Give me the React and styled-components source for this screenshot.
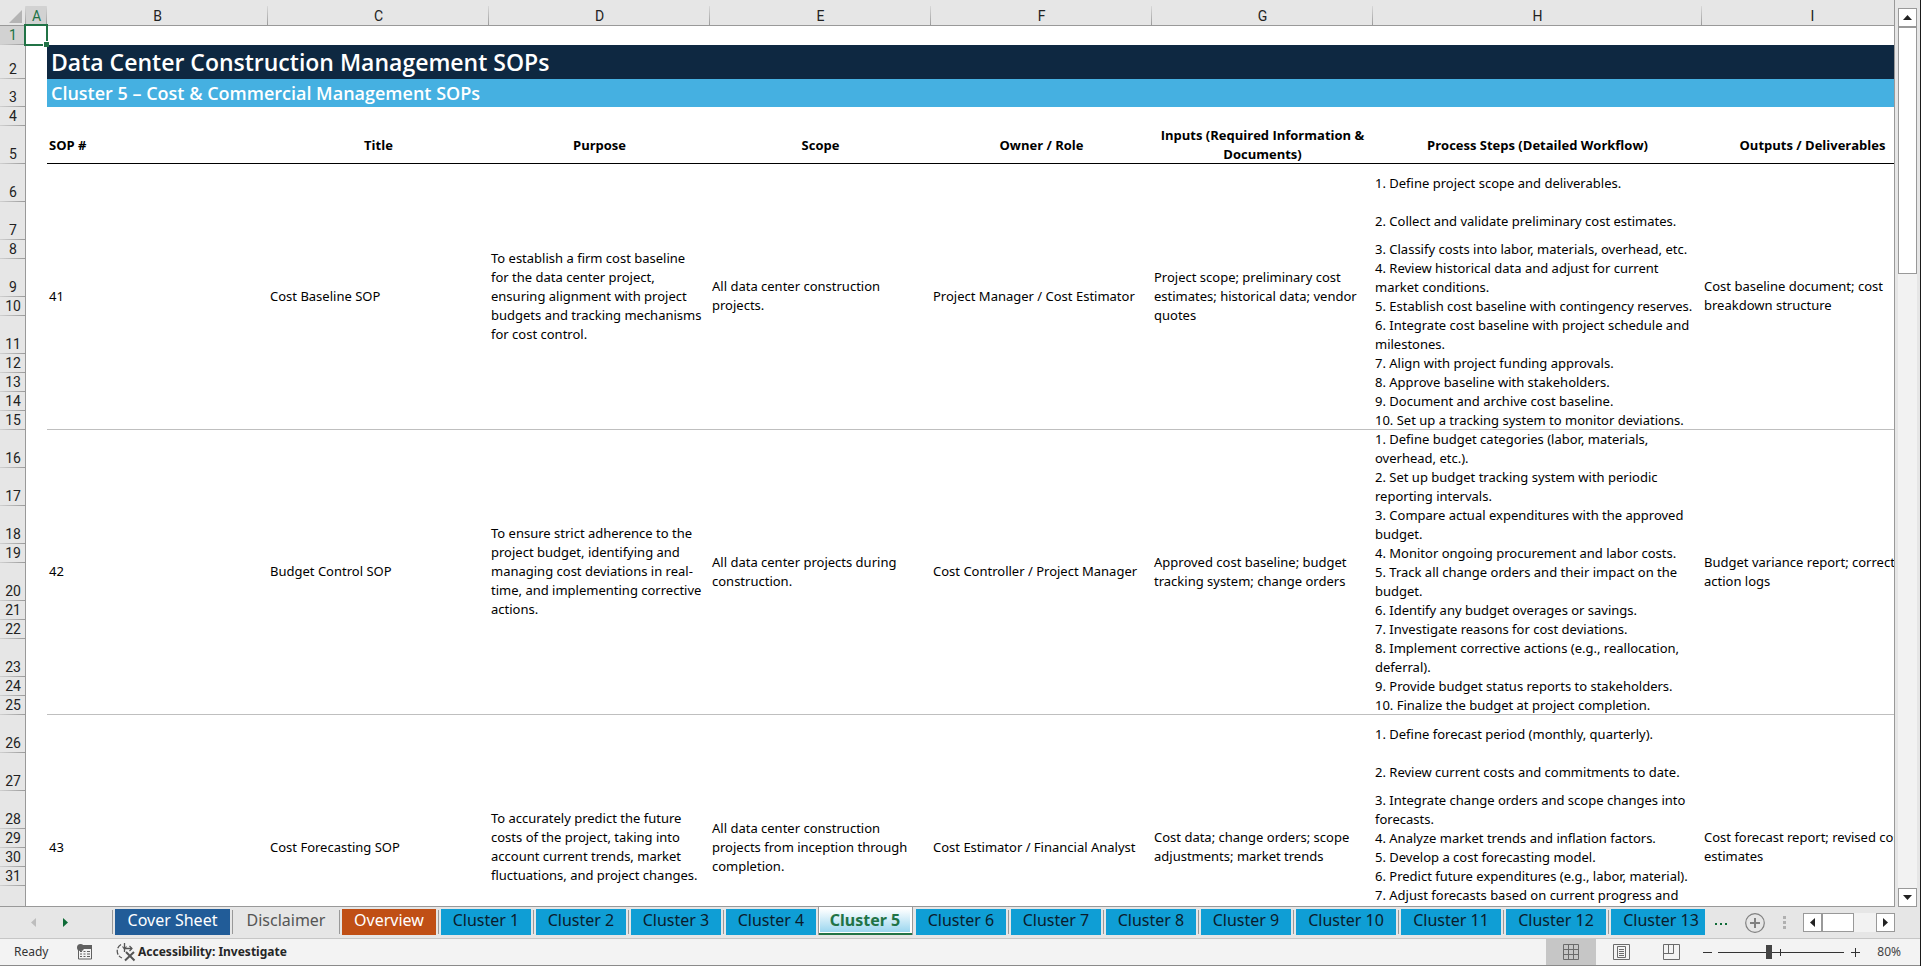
import React from "react";
import styled, { createGlobalStyle, css } from "styled-components";

const GlobalStyle = createGlobalStyle`
  *, *::before, *::after { box-sizing: border-box; }
  body { margin: 0; }
  button, input { font: inherit; margin: 0; padding: 0; }
`;

const SHEET_FONT = '"Noto Sans", "Open Sans", sans-serif';
const TITLE_FONT = '"Open Sans", "Noto Sans", sans-serif';
const CHROME = "#e6e6e6";
const LINE = "#999999";
const GREEN = "#217346";

const Window = styled.div`
  display: flex;
  flex-direction: column;
  height: 100vh;
  overflow: hidden;
  background: ${CHROME};
  border-right: 1px solid #1a1a1a;
  font-family: ${SHEET_FONT};
  color: #000;
`;

const Workspace = styled.main`
  display: flex;
  flex: 1;
  min-height: 0;
  gap: 3px;
  padding-right: 3px;
`;

const Sheet = styled.div`
  position: relative;
  flex: 1;
  min-width: 0;
  overflow: hidden;
  background: linear-gradient(#fff, #fff) 0 26px no-repeat;
  border-right: 1px solid ${LINE};
  border-bottom: 1px solid ${LINE};
`;

const Grid = styled.table`
  width: 100%;
  min-width: 1923px;
  table-layout: fixed;
  border-spacing: 0;
  font-size: 13px;
  line-height: 19px;
`;

const Col = styled.col`
  width: ${(p) => (p.$w ? `${p.$w}px` : "auto")};
`;

const Row = styled.tr`
  height: ${(p) => p.$h}px;
`;

const headingText = css`
  padding: 0;
  font-family: Roboto, sans-serif;
  font-size: 14px;
  font-weight: 400;
  text-align: center;
`;

const ColumnHeading = styled.th`
  ${headingText}
  padding-top: 6px;
  color: ${(p) => (p.$selected ? GREEN : "#222")};
  background:
    linear-gradient(${LINE}, ${LINE}) bottom / 100% 1px no-repeat,
    linear-gradient(#d8d8d8, ${LINE}) right bottom / 1px 20px no-repeat,
    linear-gradient(${(p) => (p.$selected ? "#d2d2d2, #d2d2d2" : `${CHROME}, ${CHROME}`)}) bottom / 100% 20px no-repeat,
    ${CHROME};
`;

const Corner = styled.td`
  padding: 0;
  background:
    linear-gradient(${LINE}, ${LINE}) bottom / 100% 1px no-repeat,
    linear-gradient(#d8d8d8, ${LINE}) right bottom / 1px 20px no-repeat,
    ${CHROME};
`;

const CornerButton = styled.button`
  display: block;
  width: 24px;
  height: 25px;
  padding: 9px 2px 3px 9px;
  border: 0;
  background: none;
`;

const RowHeading = styled.th`
  ${headingText}
  vertical-align: bottom;
  color: ${(p) => (p.$selected ? GREEN : "#222")};
  background:
    linear-gradient(${LINE}, ${LINE}) right / 1px 100% no-repeat,
    linear-gradient(90deg, #d0d0d0, ${LINE}) bottom / 100% 1px no-repeat,
    ${(p) => (p.$selected ? "#d2d2d2" : CHROME)};
`;

const Cell = styled.td`
  padding: 0 6px 0 2px;
  vertical-align: ${(p) => (p.$top ? "top" : "middle")};
  text-align: left;
  box-shadow: ${(p) => (p.$rule ? "inset 0 -1px #bfbfbf" : "none")};
`;

const MergedCell = styled(Cell)`
  padding-bottom: 2px;
`;

const FieldHeading = styled.th`
  padding: 0 2px;
  text-align: ${(p) => (p.$left ? "left" : "center")};
  font-family: ${TITLE_FONT};
  font-weight: 700;
  box-shadow: inset 0 -1px #000;
`;

const Banner = styled.td`
  padding: 0 4px;
  font-family: ${TITLE_FONT};
  font-weight: 600;
  font-size: ${(p) => (p.$main ? 23 : 18)}px;
  line-height: 28px;
  color: #fff;
  background: ${(p) => (p.$main ? "#0e2841" : "#45b0e1")};
`;

const Selection = styled.div`
  position: absolute;
  left: 24px;
  top: 24px;
  width: 24px;
  height: 22px;
  border: 2px solid ${GREEN};
  &::after {
    content: "";
    position: absolute;
    right: -3px;
    bottom: -3px;
    width: 6px;
    height: 6px;
    background: ${GREEN};
    border: solid #fff;
    border-width: 1px 0 0 1px;
  }
`;

const VScroll = styled.div`
  display: flex;
  flex-direction: column;
  width: 19px;
  padding-top: 8px;
`;

const HScroll = styled.div`
  display: flex;
  width: 92px;
  height: 19px;
`;

const ScrollTrack = styled.div`
  display: flex;
  flex-direction: inherit;
  flex: 1;
  background: #f2f2f2;
`;

const ScrollButton = styled.button`
  display: grid;
  place-items: center;
  width: 19px;
  height: 19px;
  border: 1px solid ${LINE};
  background: #fff;
`;

const ScrollThumb = styled.div`
  width: ${(p) => (p.$wide ? "32px" : "19px")};
  height: ${(p) => (p.$wide ? "19px" : "247px")};
  border: 1px solid ${LINE};
  background: #fff;
`;

const TabBar = styled.nav`
  display: flex;
  align-items: center;
  height: 31px;
  padding-right: 25px;
`;

const TabArrows = styled.div`
  display: flex;
  width: 112px;
  padding-left: 23px;
  gap: 12px;
`;

const ArrowButton = styled.button`
  display: grid;
  place-items: center;
  width: 20px;
  height: 20px;
  border: 0;
  background: none;
`;

const Tabs = styled.div`
  display: flex;
  align-self: stretch;
  width: 1593px;
  flex-shrink: 1;
  min-width: 0;
  overflow: hidden;
  margin-top: -1px;
`;

const TabSlot = styled.div`
  flex: none;
  padding: 3px 2px 3px 3px;
  background:
    linear-gradient(${(p) => (p.$bare ? "transparent, transparent" : `${LINE}, ${LINE}`)}) 0 4px / 1px 24px no-repeat;
`;

const tabColors = {
  navy: css`background: #215c98; color: #fff;`,
  plain: css`background: transparent; color: #555;`,
  orange: css`background: #c04f15; color: #fff;`,
  blue: css`background: #0f9ed5; color: #0b1c2c;`,
};

const Tab = styled.button`
  display: block;
  width: ${(p) => p.$w}px;
  height: 26px;
  padding-bottom: 4px;
  border: 0;
  font-size: 16px;
  line-height: 22px;
  white-space: nowrap;
  ${(p) => tabColors[p.$tone]}
`;

const ActiveSlot = styled.div`
  flex: none;
  padding: 0 2px 2px 1px;
  height: 29px;
  background: #fff;
  border: solid ${LINE};
  border-width: 0 1px;
  box-shadow: inset 0 -2px ${GREEN};
`;

const ActiveTab = styled.button`
  display: block;
  width: 90px;
  height: 26px;
  padding-top: 2px;
  border: 0;
  background: linear-gradient(#fff 10%, #9bd6ef);
  color: ${GREEN};
  font-size: 16px;
  font-weight: 700;
  line-height: 22px;
  white-space: nowrap;
`;

const TabTools = styled.div`
  display: flex;
  flex: 1;
  align-items: center;
  justify-content: space-between;
  padding-left: 10px;
`;

const MoreTabs = styled.button`
  display: grid;
  place-items: center;
  width: 13px;
  height: 20px;
  border: 0;
  background: none;
`;

const AddSheet = styled.button`
  display: block;
  width: 20px;
  height: 20px;
  border: 0;
  background: none;
`;

const StatusBar = styled.footer`
  display: flex;
  align-items: center;
  height: 28px;
  padding: 0 19px 0 14px;
  border-top: 1px solid #c6c6c6;
  border-bottom: 1px solid #8a8a8a;
  background: #f3f3f3;
  color: #333;
  font-size: 12px;
  line-height: 16px;
`;

const Ready = styled.span`
  width: 63px;
`;

const StatusButton = styled.button`
  display: flex;
  align-items: center;
  gap: 2px;
  margin-right: 24px;
  border: 0;
  background: none;
  color: #262626;
  font-weight: 700;
`;

const StatusRight = styled.div`
  display: flex;
  align-items: center;
  align-self: stretch;
  margin-left: auto;
`;

const ViewButton = styled.button`
  display: grid;
  place-items: center;
  align-self: stretch;
  width: 50px;
  border: 0;
  background: ${(p) => (p.$on ? "#c6c6c6" : "none")};
`;

const ZoomButton = styled.button`
  display: grid;
  place-items: center;
  width: 22px;
  height: 22px;
  border: 0;
  background: none;
`;

const ZoomSlider = styled.input`
  appearance: none;
  width: 126px;
  height: 14px;
  background:
    linear-gradient(#333, #333) 0 7px / 100% 1px no-repeat,
    linear-gradient(#333, #333) 62px 4px / 1px 7px no-repeat;
  &::-webkit-slider-thumb {
    appearance: none;
    width: 6px;
    height: 14px;
    background: #444;
  }
`;

const ZoomValue = styled.button`
  width: 35px;
  border: 0;
  background: none;
  color: #444;
  text-align: right;
`;

const Svg = styled.svg`
  display: block;
`;

const triangles = {
  up: "M4.5 0 L9 5 H0 Z",
  down: "M0 0 H9 L4.5 5 Z",
  left: "M5 0 V9 L0 4.5 Z",
  right: "M0 0 L5 4.5 L0 9 Z",
};

function Triangle({ dir, color = "#222" }) {
  const tall = dir === "left" || dir === "right";
  const w = tall ? 5 : 9;
  const h = tall ? 9 : 5;
  return (
    <Svg width={w} height={h} viewBox={`0 0 ${w} ${h}`} aria-hidden="true">
      <path d={triangles[dir]} fill={color} />
    </Svg>
  );
}

const letters = ["A", "B", "C", "D", "E", "F", "G", "H", "I"];
const widths = [26, 21, 221, 221, 221, 221, 221, 221, 329, null];
const fields = [
  "SOP #",
  "Title",
  "Purpose",
  "Scope",
  "Owner / Role",
  "Inputs (Required Information & Documents)",
  "Process Steps (Detailed Workflow)",
  "Outputs / Deliverables",
];

const procedures = [
  {
    first: 6,
    cells: [
      "41",
      "Cost Baseline SOP",
      "To establish a firm cost baseline for the data center project, ensuring alignment with project budgets and tracking mechanisms for cost control.",
      "All data center construction projects.",
      "Project Manager / Cost Estimator",
      "Project scope; preliminary cost estimates; historical data; vendor quotes",
    ],
    output: "Cost baseline document; cost breakdown structure",
    steps: [
      [38, "1. Define project scope and deliverables."],
      [38, "2. Collect and validate preliminary cost estimates."],
      [19, "3. Classify costs into labor, materials, overhead, etc."],
      [38, "4. Review historical data and adjust for current market conditions."],
      [19, "5. Establish cost baseline with contingency reserves."],
      [38, "6. Integrate cost baseline with project schedule and milestones."],
      [19, "7. Align with project funding approvals."],
      [19, "8. Approve baseline with stakeholders."],
      [19, "9. Document and archive cost baseline."],
      [19, "10. Set up a tracking system to monitor deviations."],
    ],
  },
  {
    first: 16,
    cells: [
      "42",
      "Budget Control SOP",
      "To ensure strict adherence to the project budget, identifying and managing cost deviations in real-time, and implementing corrective actions.",
      "All data center projects during construction.",
      "Cost Controller / Project Manager",
      "Approved cost baseline; budget tracking system; change orders",
    ],
    output: "Budget variance report; corrective action logs",
    steps: [
      [38, "1. Define budget categories (labor, materials, overhead, etc.)."],
      [38, "2. Set up budget tracking system with periodic reporting intervals."],
      [38, "3. Compare actual expenditures with the approved budget."],
      [19, "4. Monitor ongoing procurement and labor costs."],
      [38, "5. Track all change orders and their impact on the budget."],
      [19, "6. Identify any budget overages or savings."],
      [19, "7. Investigate reasons for cost deviations."],
      [38, "8. Implement corrective actions (e.g., reallocation, deferral)."],
      [19, "9. Provide budget status reports to stakeholders."],
      [19, "10. Finalize the budget at project completion."],
    ],
  },
  {
    first: 26,
    cells: [
      "43",
      "Cost Forecasting SOP",
      "To accurately predict the future costs of the project, taking into account current trends, market fluctuations, and project changes.",
      "All data center construction projects from inception through completion.",
      "Cost Estimator / Financial Analyst",
      "Cost data; change orders; scope adjustments; market trends",
    ],
    output: "Cost forecast report; revised cost estimates",
    steps: [
      [38, "1. Define forecast period (monthly, quarterly)."],
      [38, "2. Review current costs and commitments to date."],
      [38, "3. Integrate change orders and scope changes into forecasts."],
      [19, "4. Analyze market trends and inflation factors."],
      [19, "5. Develop a cost forecasting model."],
      [19, "6. Predict future expenditures (e.g., labor, material)."],
      [95, "7. Adjust forecasts based on current progress and"],
    ],
  },
];

const tabs = [
  ["Cover Sheet", "navy", 115],
  ["Disclaimer", "plain", 102],
  ["Overview", "orange", 94],
  ...Array.from({ length: 13 }, (_, i) => [`Cluster ${i + 1}`, "blue", i < 9 ? 90 : 100]),
];

function Procedure({ item }) {
  const span = item.steps.length;
  return item.steps.map(([height, text], i) => {
    const open = height > 38;
    return (
      <Row key={item.first + i} $h={height}>
        <RowHeading scope="row">{open ? null : item.first + i}</RowHeading>
        <Cell />
        {i === 0 && item.cells.map((c) => <MergedCell key={c} rowSpan={span} $rule>{c}</MergedCell>)}
        <Cell $rule={i === span - 1} $top={open}>{text}</Cell>
        {i === 0 && <MergedCell rowSpan={span} $rule>{item.output}</MergedCell>}
      </Row>
    );
  });
}

function Spreadsheet() {
  return (
    <Sheet>
      <Grid>
        <colgroup>
          {widths.map((w, i) => <Col key={i} $w={w} />)}
        </colgroup>
        <thead>
          <Row $h={26}>
            <Corner>
              <CornerButton aria-label="Select all cells">
                <Svg width="13" height="13" viewBox="0 0 13 13" aria-hidden="true">
                  <path d="M13 0 V13 H0 Z" fill="#b4b4b4" />
                </Svg>
              </CornerButton>
            </Corner>
            {letters.map((l) => (
              <ColumnHeading key={l} scope="col" $selected={l === "A"}>{l}</ColumnHeading>
            ))}
          </Row>
        </thead>
        <tbody>
          <Row $h={19}>
            <RowHeading scope="row" $selected>1</RowHeading>
            <Cell colSpan={9} />
          </Row>
          <Row $h={34}>
            <RowHeading scope="row">2</RowHeading>
            <Cell />
            <Banner colSpan={8} $main>Data Center Construction Management SOPs</Banner>
          </Row>
          <Row $h={28}>
            <RowHeading scope="row">3</RowHeading>
            <Cell />
            <Banner colSpan={8}>Cluster 5 – Cost &amp; Commercial Management SOPs</Banner>
          </Row>
          <Row $h={19}>
            <RowHeading scope="row">4</RowHeading>
            <Cell colSpan={9} />
          </Row>
          <Row $h={38}>
            <RowHeading scope="row">5</RowHeading>
            <Cell />
            {fields.map((f, i) => (
              <FieldHeading key={f} scope="col" $left={i === 0}>{f}</FieldHeading>
            ))}
          </Row>
          {procedures.map((p) => <Procedure key={p.first} item={p} />)}
        </tbody>
      </Grid>
      <Selection />
    </Sheet>
  );
}

function SheetTabs() {
  return (
    <TabBar aria-label="Sheets">
      <TabArrows>
        <ArrowButton aria-label="Previous sheets" disabled><Triangle dir="left" color="#bdbdbd" /></ArrowButton>
        <ArrowButton aria-label="Next sheets"><Triangle dir="right" color="#0e6b37" /></ArrowButton>
      </TabArrows>
      <Tabs>
        {tabs.map(([name, tone, w]) =>
          name === "Cluster 5" ? (
            <ActiveSlot key={name}><ActiveTab aria-current="page">{name}</ActiveTab></ActiveSlot>
          ) : (
            <TabSlot key={name} $bare={name === "Cluster 6"}>
              <Tab $tone={tone} $w={w}>{name}</Tab>
            </TabSlot>
          )
        )}
      </Tabs>
      <TabTools>
        <MoreTabs aria-label="More sheets">
          <Svg width="13" height="4" viewBox="0 0 13 4" aria-hidden="true">
            <path d="M0 2h2v2H0zM5 2h2v2H5zM10 2h2v2h-2z" fill="#0e6b37" />
          </Svg>
        </MoreTabs>
        <AddSheet aria-label="New sheet">
          <Svg width="20" height="20" viewBox="0 0 20 20" fill="none" stroke="#808080" aria-hidden="true">
            <circle cx="10" cy="10" r="9.3" strokeWidth="1.2" />
            <path d="M5 10h10M10 5v10" strokeWidth="2" />
          </Svg>
        </AddSheet>
        <Svg width="3" height="13" viewBox="0 0 3 13" aria-hidden="true">
          <path d="M0 0h3v3H0zM0 5h3v3H0zM0 10h3v3H0z" fill="#b0b0b0" />
        </Svg>
        <HScroll>
          <ScrollButton aria-label="Scroll left"><Triangle dir="left" /></ScrollButton>
          <ScrollTrack><ScrollThumb $wide /></ScrollTrack>
          <ScrollButton aria-label="Scroll right"><Triangle dir="right" /></ScrollButton>
        </HScroll>
      </TabTools>
    </TabBar>
  );
}

function Status() {
  return (
    <StatusBar>
      <Ready>Ready</Ready>
      <StatusButton aria-label="Record macro">
        <Svg width="15" height="16" viewBox="0 0 15 16" aria-hidden="true">
          <path d="M5 1h10v4H3z" fill="#606060" />
          <path d="M1.5 6v9h13V4" fill="none" stroke="#606060" />
          <path d="M3 7.5h2M6.5 7.5h2M10 7.5h3M3 10h2M6.5 10h2M10 10h3M3 12.5h2M6.5 12.5h2M10 12.5h3" stroke="#606060" />
          <circle cx="3.5" cy="3.5" r="3.5" fill="#606060" />
        </Svg>
      </StatusButton>
      <StatusButton>
        <Svg width="20" height="20" viewBox="0 0 20 20" fill="none" stroke="#555" aria-hidden="true">
          <path d="M5 2.5A7.5 7.5 0 0 0 6 16" strokeWidth="1.3" strokeDasharray="5 1.5" />
          <path d="M8.5 1v5.500M8.500 6.500v3.500M16 6.500h-7.500" strokeWidth="1.3" />
          <path d="M6.500 4.500l2 2.500 2-2.500M13.500 4l2.500 2.500-2.500 2.500" strokeWidth="1.2" />
          <path d="M10 10l8.500 8.500M18 10l-9 8.500" strokeWidth="2" />
        </Svg>
        Accessibility: Investigate
      </StatusButton>
      <StatusRight>
        <ViewButton $on aria-label="Normal view" aria-pressed="true">
          <Svg width="16" height="16" viewBox="0 0 16 16" fill="none" stroke="#6a6a6a" aria-hidden="true">
            <path d="M.5 .5h15v15H.5zM5.5 0v16M10.5 0v16M0 5.5h16M0 10.5h16" />
          </Svg>
        </ViewButton>
        <ViewButton aria-label="Page layout view">
          <Svg width="17" height="16" viewBox="0 0 17 16" fill="none" stroke="#6a6a6a" aria-hidden="true">
            <path d="M.5 .5h16v15H.5zM4.5 2.5h8v11h-8zM6 5.5h5M6 7.5h5M6 9.5h5M6 11.5h5" />
          </Svg>
        </ViewButton>
        <ViewButton aria-label="Page break preview">
          <Svg width="17" height="16" viewBox="0 0 17 16" fill="none" stroke="#6a6a6a" aria-hidden="true">
            <path d="M.5 .5h16v15H.5zM.5 9.5h10V.5M5.5 .5v9" />
          </Svg>
        </ViewButton>
        <ZoomButton aria-label="Zoom out">
          <Svg width="9" height="9" viewBox="0 0 9 9" stroke="#333" aria-hidden="true"><path d="M0 4.5h9" /></Svg>
        </ZoomButton>
        <ZoomSlider type="range" min="0" max="200" defaultValue="80" aria-label="Zoom" />
        <ZoomButton aria-label="Zoom in">
          <Svg width="9" height="9" viewBox="0 0 9 9" stroke="#333" aria-hidden="true"><path d="M0 4.5h9M4.5 0v9" /></Svg>
        </ZoomButton>
        <ZoomValue>80%</ZoomValue>
      </StatusRight>
    </StatusBar>
  );
}

export default function App() {
  return (
    <>
      <GlobalStyle />
      <Window>
        <Workspace>
          <Spreadsheet />
          <VScroll>
            <ScrollButton aria-label="Scroll up"><Triangle dir="up" /></ScrollButton>
            <ScrollTrack><ScrollThumb /></ScrollTrack>
            <ScrollButton aria-label="Scroll down"><Triangle dir="down" /></ScrollButton>
          </VScroll>
        </Workspace>
        <SheetTabs />
        <Status />
      </Window>
    </>
  );
}
